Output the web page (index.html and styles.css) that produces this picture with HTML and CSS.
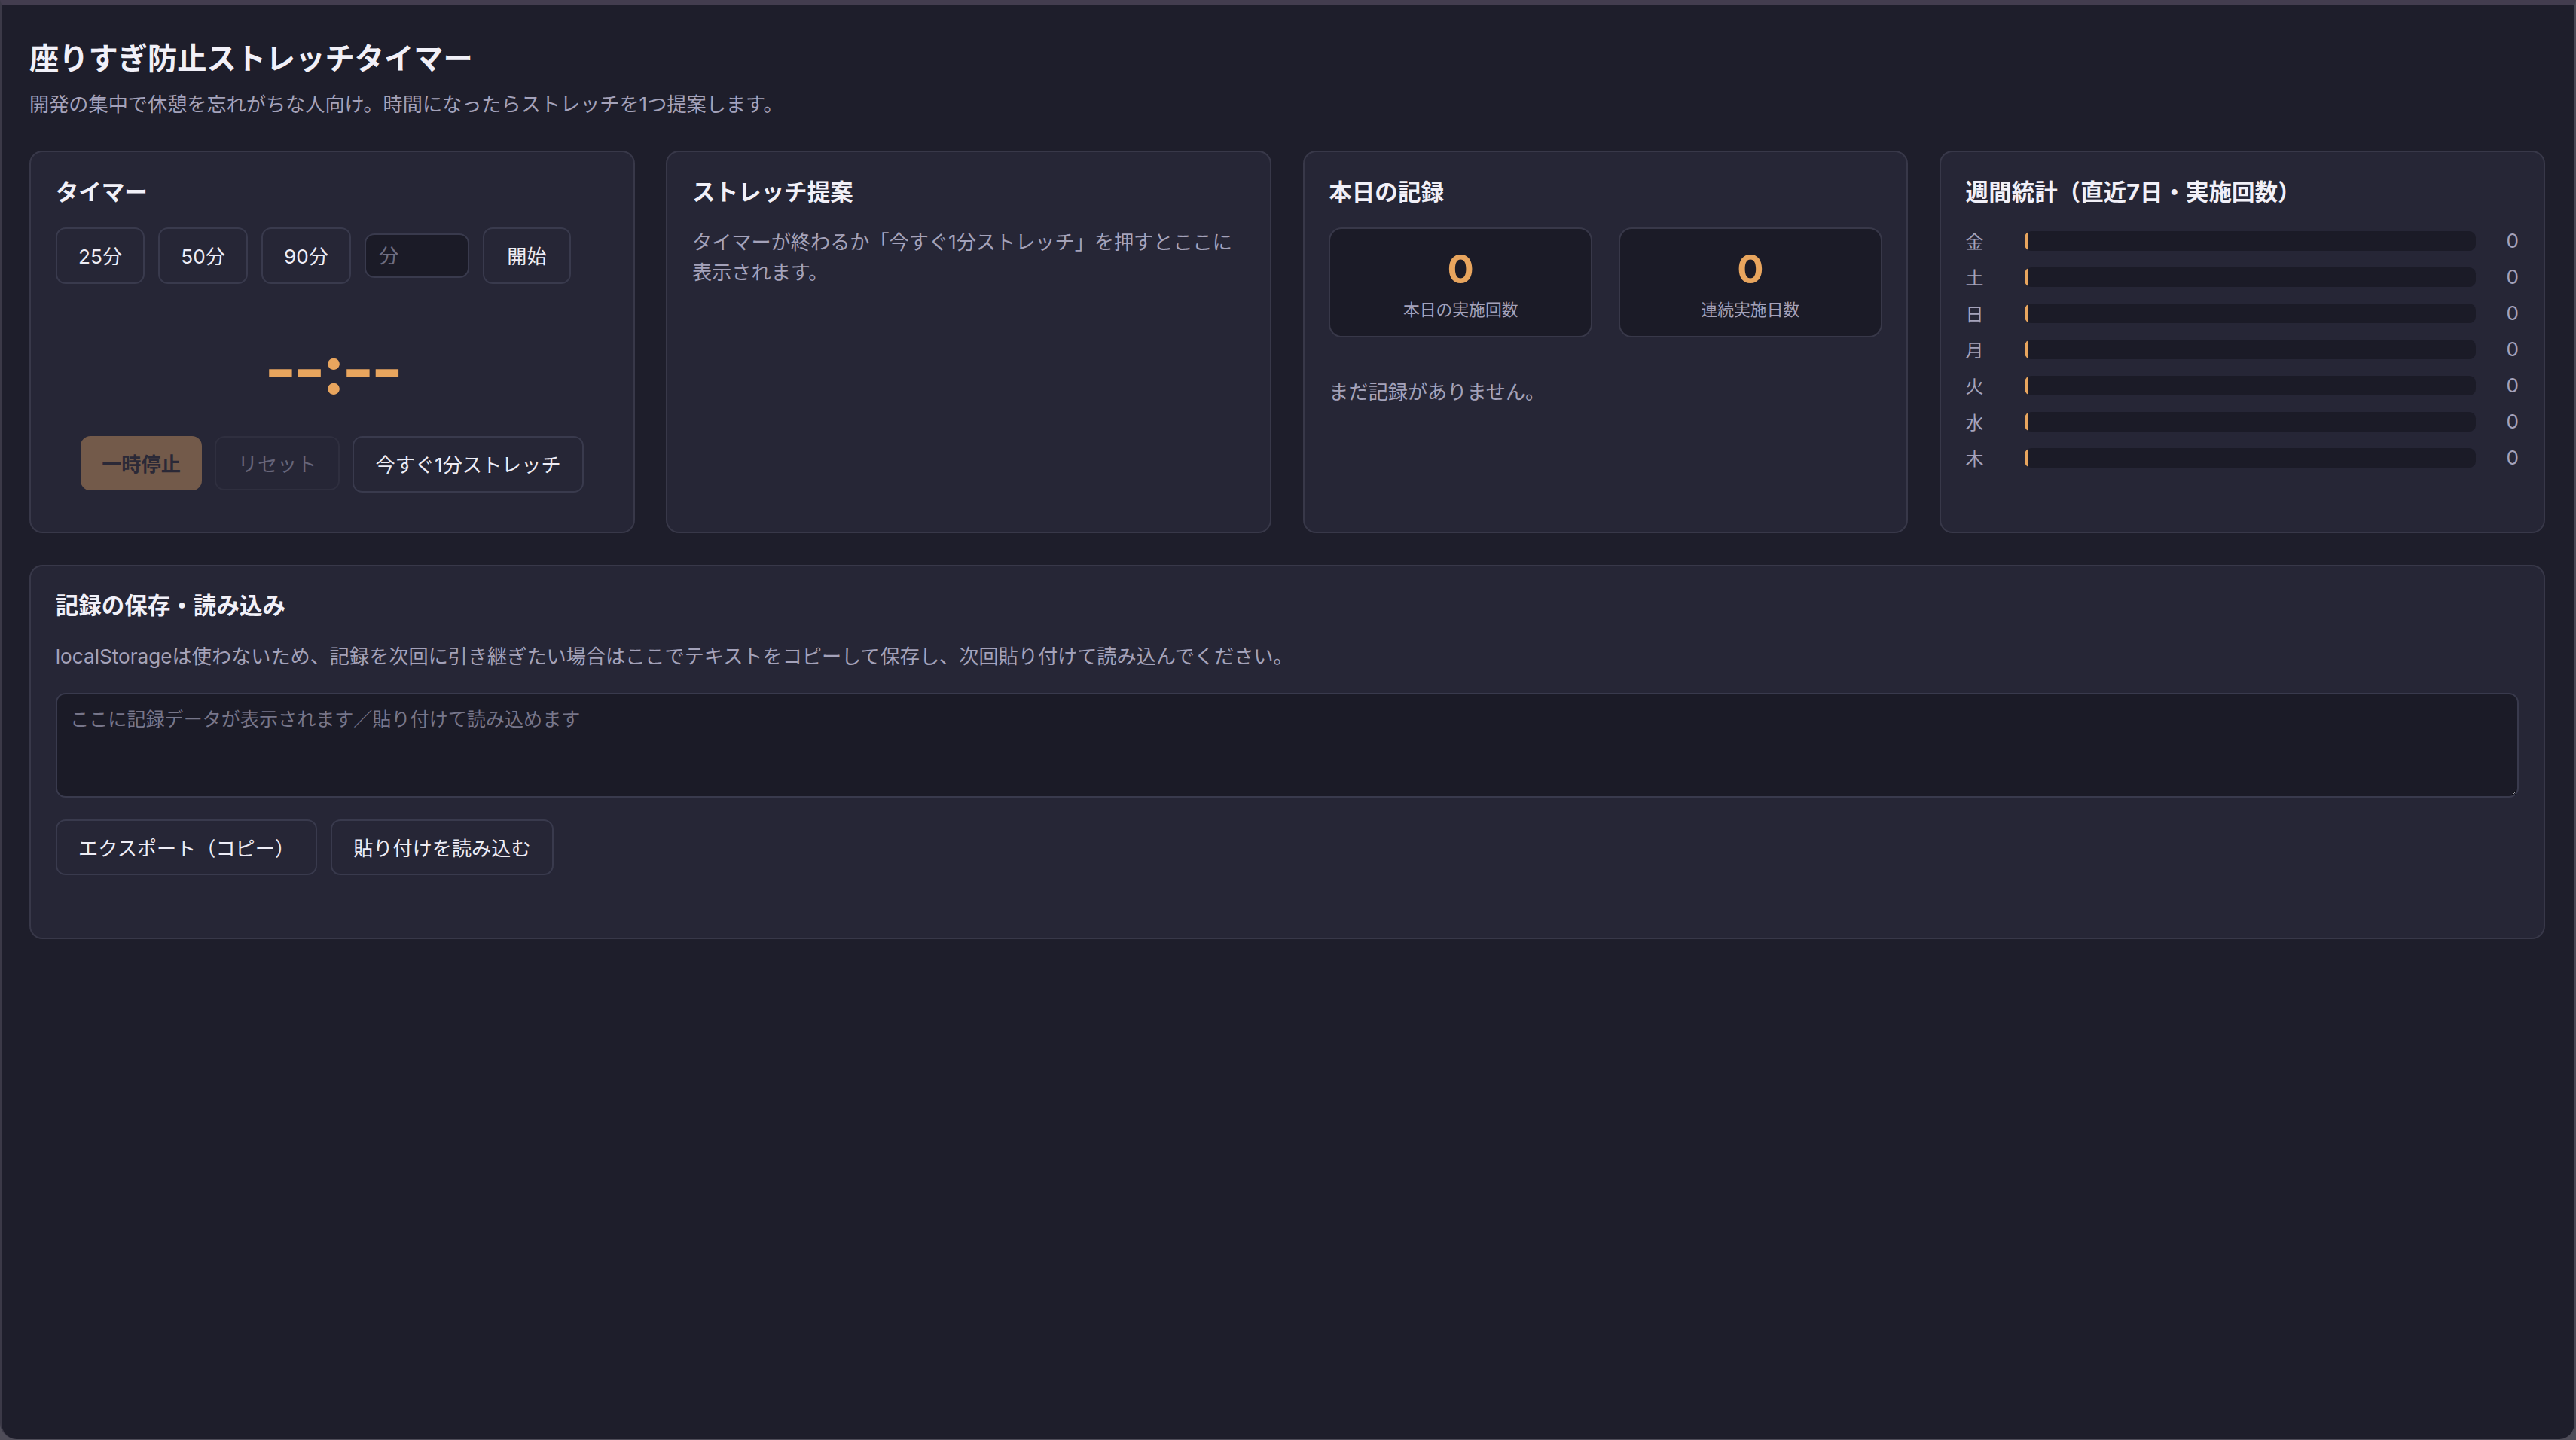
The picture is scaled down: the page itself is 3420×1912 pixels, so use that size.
FILE: index.html
```html
<!DOCTYPE html>
<html lang="ja">
<head>
  <meta charset="UTF-8">
  <meta name="viewport" content="width=device-width, initial-scale=1.0">
  <title>座りすぎ防止ストレッチタイマー</title>
  <link rel="stylesheet" href="styles.css">
</head>
<body>
  <div class="window">
    <main class="app">
      <header class="app-header">
        <h1 class="app-title">座りすぎ防止ストレッチタイマー</h1>
        <p class="app-lead">開発の集中で休憩を忘れがちな人向け。時間になったらストレッチを1つ提案します。</p>
      </header>

      <section class="card-grid">
        <!-- タイマー -->
        <div class="card">
          <h2 class="card-title">タイマー</h2>
          <div class="preset-row">
            <button class="btn">25分</button>
            <button class="btn">50分</button>
            <button class="btn">90分</button>
            <input type="number" class="minutes-input" placeholder="分">
            <button class="btn">開始</button>
          </div>
          <div class="timer-display" id="timerDisplay">--:--</div>
          <div class="control-row">
            <button class="btn btn-primary" disabled>一時停止</button>
            <button class="btn btn-muted" disabled>リセット</button>
            <button class="btn">今すぐ1分ストレッチ</button>
          </div>
        </div>

        <!-- ストレッチ提案 -->
        <div class="card">
          <h2 class="card-title">ストレッチ提案</h2>
          <p class="card-text">タイマーが終わるか「今すぐ1分ストレッチ」を押すとここに表示されます。</p>
        </div>

        <!-- 本日の記録 -->
        <div class="card">
          <h2 class="card-title">本日の記録</h2>
          <div class="stat-grid">
            <div class="stat-box">
              <div class="stat-value">0</div>
              <div class="stat-label">本日の実施回数</div>
            </div>
            <div class="stat-box">
              <div class="stat-value">0</div>
              <div class="stat-label">連続実施日数</div>
            </div>
          </div>
          <p class="card-text empty-note">まだ記録がありません。</p>
        </div>

        <!-- 週間統計 -->
        <div class="card">
          <h2 class="card-title">週間統計（直近7日・実施回数）</h2>
          <div class="week-list">
            <div class="week-row"><span class="week-day">金</span><div class="week-bar"><div class="week-fill"></div></div><span class="week-count">0</span></div>
            <div class="week-row"><span class="week-day">土</span><div class="week-bar"><div class="week-fill"></div></div><span class="week-count">0</span></div>
            <div class="week-row"><span class="week-day">日</span><div class="week-bar"><div class="week-fill"></div></div><span class="week-count">0</span></div>
            <div class="week-row"><span class="week-day">月</span><div class="week-bar"><div class="week-fill"></div></div><span class="week-count">0</span></div>
            <div class="week-row"><span class="week-day">火</span><div class="week-bar"><div class="week-fill"></div></div><span class="week-count">0</span></div>
            <div class="week-row"><span class="week-day">水</span><div class="week-bar"><div class="week-fill"></div></div><span class="week-count">0</span></div>
            <div class="week-row"><span class="week-day">木</span><div class="week-bar"><div class="week-fill"></div></div><span class="week-count">0</span></div>
          </div>
        </div>
      </section>

      <!-- 記録の保存・読み込み -->
      <section class="card card-wide">
        <h2 class="card-title">記録の保存・読み込み</h2>
        <p class="card-text">localStorageは使わないため、記録を次回に引き継ぎたい場合はここでテキストをコピーして保存し、次回貼り付けて読み込んでください。</p>
        <textarea class="io-text" placeholder="ここに記録データが表示されます／貼り付けて読み込めます"></textarea>
        <div class="io-row">
          <button class="btn">エクスポート（コピー）</button>
          <button class="btn">貼り付けを読み込む</button>
        </div>
        <p class="io-status"></p>
      </section>
    </main>
  </div>
</body>
</html>
```

FILE: styles.css
```css
/* layout is written at 1x and scaled up to the 3420px window */
html {
  zoom: 2.181;
  background-color: #4f4d59;
  overflow: hidden;
}

body {
  margin: 0;
  font-family: Inter, "Noto Sans CJK JP", sans-serif;
  color: #eeedf6;
}

.window {
  box-sizing: border-box;
  height: 876px;
  background-color: #1e1e2b;
  border-top: 3px solid #433d4f;
  border-left: 1px solid #3b3947;
  border-right: 1px solid #4a4855;
  border-radius: 0 0 10px 10px;
  overflow: hidden;
}

.app {
  padding: 21px 18px 18px 17px;
}

.app-title {
  margin: 0 0 7px;
  font-size: 18px;
  line-height: 24px;
  font-weight: 700;
  color: #f1f0f8;
}

.app-lead {
  margin: 0;
  font-size: 12px;
  line-height: 18px;
  color: #a4a2ba;
}

.card-grid {
  display: grid;
  grid-template-columns: repeat(4, 1fr);
  gap: 19px;
  margin-top: 19px;
}

.card {
  box-sizing: border-box;
  min-height: 233px;
  padding: 15px;
  background-color: #262636;
  border: 1px solid #383849;
  border-radius: 8px;
}

.card-title {
  margin: 0 0 13px;
  font-size: 14px;
  line-height: 18px;
  font-weight: 700;
  color: #f1f0f8;
}

.card-text {
  margin: 0;
  font-size: 12px;
  line-height: 18px;
  color: #a4a2ba;
}

/* buttons */
.btn {
  box-sizing: border-box;
  height: 34px;
  min-width: 54px;
  padding: 0 13px;
  font-family: inherit;
  font-size: 12px;
  color: #eeedf6;
  background-color: #262636;
  border: 1px solid #393a4d;
  border-radius: 6px;
  cursor: pointer;
}

.btn-primary {
  height: 33px;
  padding: 0 12px;
  font-weight: 700;
  color: #2b2937;
  background-color: #735a4a;
  border-color: #735a4a;
}

.btn-muted {
  height: 33px;
  color: #66657a;
  border-color: #2f2f3f;
}

/* timer */
.preset-row {
  display: flex;
  align-items: center;
  gap: 8px;
}

.minutes-input {
  box-sizing: border-box;
  width: 64px;
  height: 27px;
  padding: 0 8px;
  font-family: inherit;
  font-size: 12px;
  color: #eeedf6;
  background-color: #1b1b27;
  border: 1px solid #393a4d;
  border-radius: 6px;
}

.minutes-input::placeholder {
  color: #6f6e82;
}

.timer-display {
  margin: 26px 0 15px;
  text-align: center;
  font-size: 42px;
  line-height: 52px;
  font-weight: 700;
  letter-spacing: -2px;
  color: #e8a55e;
}

.control-row {
  display: flex;
  justify-content: center;
  gap: 8px;
}

/* today stats */
.stat-grid {
  display: grid;
  grid-template-columns: 1fr 1fr;
  gap: 16px;
}

.stat-box {
  padding: 10px;
  text-align: center;
  background-color: #1b1b27;
  border: 1px solid #383849;
  border-radius: 8px;
}

.stat-value {
  font-size: 24px;
  line-height: 29px;
  font-weight: 700;
  color: #e8a55e;
}

.stat-label {
  margin-top: 4px;
  font-size: 10px;
  line-height: 12px;
  color: #a4a2ba;
}

.empty-note {
  margin-top: 24px;
}

/* weekly stats */
.week-list {
  display: flex;
  flex-direction: column;
  gap: 8px;
}

.week-row {
  display: grid;
  grid-template-columns: 28px 1fr 18px;
  gap: 8px;
  align-items: center;
  height: 14px;
}

.week-day {
  font-size: 11px;
  color: #a4a2ba;
}

.week-count {
  text-align: right;
  font-size: 12px;
  color: #a4a2ba;
}

.week-bar {
  height: 12px;
  background-color: #1b1b27;
  border-radius: 4px;
  overflow: hidden;
}

.week-fill {
  width: 2px;
  height: 100%;
  background-color: #e8a55e;
  border-radius: 4px;
}

/* save / load */
.card-wide {
  margin-top: 19px;
  min-height: 228px;
}

.card-wide .card-text {
  margin-bottom: 13px;
}

.io-text {
  display: block;
  box-sizing: border-box;
  width: 100%;
  height: 64px;
  padding: 8px;
  font-family: inherit;
  font-size: 11.5px;
  line-height: 1.3;
  color: #eeedf6;
  background-color: #1b1b27;
  border: 1px solid #393a4d;
  border-radius: 6px;
  resize: vertical;
}

.io-text::placeholder {
  color: #77768a;
}

.io-row {
  display: flex;
  gap: 8px;
  margin-top: 13px;
}

.io-status {
  margin: 5px 0 0;
  min-height: 18px;
  font-size: 12px;
  color: #a4a2ba;
}
```
